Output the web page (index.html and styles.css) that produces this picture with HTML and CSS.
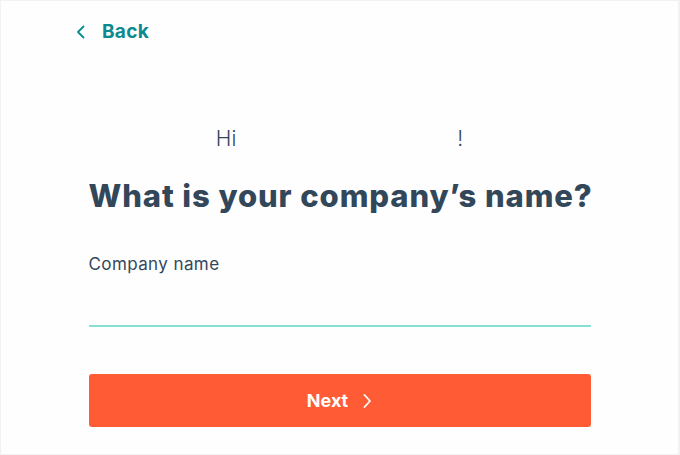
FILE: index.html
```html
<!DOCTYPE html>
<html lang="en">
<head>
    <meta charset="UTF-8">
    <meta name="viewport" content="width=device-width, initial-scale=1.0">
    <title>Company name</title>
    <link rel="stylesheet" href="styles.css">
</head>
<body>
    <div class="frame">
        <a class="back" href="#">
            <svg width="10" height="14" viewBox="0 0 10 14"><path d="M7.5 1.5 L2 7 L7.5 12.5" fill="none" stroke="#0b8a8f" stroke-width="1.8" stroke-linecap="round" stroke-linejoin="round"/></svg>
            <span>Back</span>
        </a>

        <div class="main">
            <p class="greeting">Hi <span class="name"></span>!</p>
            <h1>What is your company’s name?</h1>

            <label class="field">
                <span class="label">Company name</span>
                <input type="text" class="input">
            </label>

            <button class="next">
                Next
                <svg width="10" height="16" viewBox="0 0 10 16"><path d="M2.5 2 L8 8 L2.5 14" fill="none" stroke="#fff" stroke-width="1.8" stroke-linecap="round" stroke-linejoin="round"/></svg>
            </button>
        </div>
    </div>
</body>
</html>
```

FILE: styles.css
```css
html, body {
    margin: 0;
    padding: 0;
    background-color: #f2f2f2;
}

body {
    font-family: "Inter", "Noto Sans", sans-serif;
    color: #33475b;
}

.frame {
    box-sizing: border-box;
    width: 677px;
    height: 453px;
    margin: 1px 0 0 1px;
    background-color: #fefefe;
    padding-top: 19px;
}

.back {
    display: inline-flex;
    align-items: center;
    gap: 16px;
    margin-left: 75px;
    color: #0b8a8f;
    text-decoration: none;
    font-weight: 700;
    font-size: 19px;
    letter-spacing: 0.3px;
}

.main {
    width: 502px;
    margin: 0 auto;
    padding-top: 82px;
}

.greeting {
    margin: 0;
    text-align: center;
    font-size: 21px;
    font-weight: 300;
    line-height: 28px;
}

.name {
    display: inline-block;
    width: 215px;
}

h1 {
    margin: 24px 0 0 0;
    font-size: 31px;
    font-weight: 800;
    line-height: 38px;
    text-align: center;
    letter-spacing: 0.9px;
    white-space: nowrap;
}

.field {
    display: block;
    margin-top: 38px;
}

.label {
    display: block;
    font-size: 17px;
    line-height: 22px;
    letter-spacing: 0.4px;
}

.input {
    display: block;
    box-sizing: border-box;
    width: 100%;
    height: 48px;
    border: none;
    border-bottom: 2px solid #86e0d4;
    background: transparent;
    outline: none;
    font-size: 16px;
    margin-top: 4px;
}

.next {
    display: flex;
    align-items: center;
    justify-content: center;
    gap: 14px;
    width: 100%;
    height: 53px;
    margin-top: 47px;
    border: none;
    border-radius: 3px;
    background-color: #ff5c35;
    color: #fff;
    font-family: "Inter", "Noto Sans", sans-serif;
    font-size: 18px;
    font-weight: 700;
    cursor: pointer;
}
```
